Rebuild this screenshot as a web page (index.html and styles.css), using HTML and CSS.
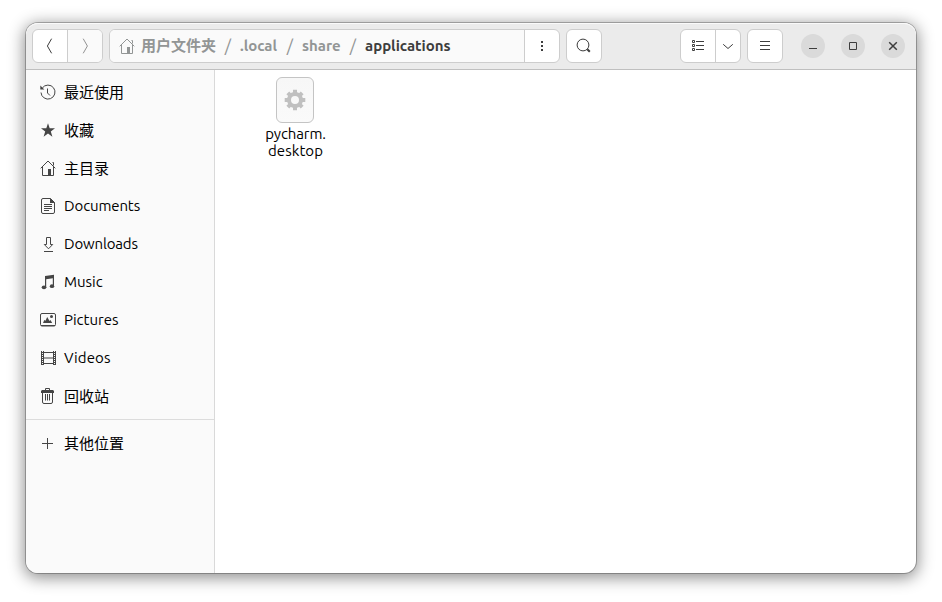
FILE: index.html
```html
<!DOCTYPE html>
<html lang="zh-CN">
<head>
<meta charset="utf-8">
<title>applications</title>
<link rel="stylesheet" href="styles.css">
</head>
<body>
<main class="window">
  <header class="header">
    <div class="group nav">
      <button class="btn" aria-label="Back"><svg class="icon" viewBox="0 0 16 16"><path d="M9.600.7 5.400 8l4.200 7.300"/></svg></button>
      <button class="btn off" aria-label="Forward"><svg class="icon" viewBox="0 0 16 16"><path d="M6.200.7 10.400 8l-4.200 7.300"/></svg></button>
    </div>
    <div class="group path">
      <div class="crumbs">
        <svg class="icon" viewBox="0 0 16 16"><path d="M.7 8.300 8 1l7.300 7.300M2.500 7v8.500h11V7M12.500 2.500h1v3"/><path class="solid" d="M8 9h3v6H8z"/></svg>
        <span class="crumb cjk">用户文件夹</span><i class="slash">/</i>
        <span class="crumb local">.local</span><i class="slash">/</i>
        <span class="crumb share">share</span><i class="slash">/</i>
        <span class="crumb current">applications</span>
      </div>
      <button class="btn" aria-label="More"><svg class="icon" viewBox="0 0 16 16"><path class="solid" d="M7 3h2v2H7zM7 7h2v2H7zM7 11h2v2H7z"/></svg></button>
    </div>
    <div class="group search">
      <button class="btn" aria-label="Search"><svg class="icon" viewBox="0 0 16 16"><circle cx="7" cy="7" r="5.900"/><path class="thick" d="m11.300 11.300 2.500 2.500"/></svg></button>
    </div>
    <div class="group view">
      <button class="btn" aria-label="List view"><svg class="icon" viewBox="0 0 16 16"><path d="M2.500 2.500h2v2h-2zM2.500 6.500h2v2h-2zM2.500 10.500h2v2h-2zM6 3.500h8M6 7.500h8M6 11.500h8"/></svg></button>
      <button class="btn narrow" aria-label="View options"><svg class="icon" viewBox="0 0 16 16"><path d="m3.200 6.300 4.800 4.200 4.800-4.200"/></svg></button>
    </div>
    <div class="group">
      <button class="btn" aria-label="Menu"><svg class="icon" viewBox="0 0 16 16"><path d="M3 3.500h10M3 7.500h10M3 11.500h10"/></svg></button>
    </div>
    <div class="controls">
      <button class="round" aria-label="Minimize"><svg class="icon" viewBox="0 0 16 16"><path d="M4 10.500h8"/></svg></button>
      <button class="round" aria-label="Maximize"><svg class="icon" viewBox="0 0 16 16"><path d="M4.500 4.500h7v7h-7z"/></svg></button>
      <button class="round" aria-label="Close"><svg class="icon" viewBox="0 0 16 16"><path class="cross" d="m4.200 4.200 7.600 7.600m0-7.600-7.600 7.600"/></svg></button>
    </div>
  </header>
  <div class="body">
    <nav class="sidebar">
      <a class="row cjk"><svg class="icon" viewBox="0 0 16 16"><path d="M2.300 4A7 7 0 1 1 1 8.500M7.500 4.500V9l2.500 2.500"/><path class="solid" d="M.3 1.500v4h4z"/></svg><span>最近使用</span></a>
      <a class="row cjk"><svg class="icon" viewBox="0 0 16 16"><path class="solid" d="m8 1.300 1.700 5H15l-4.200 3.300 1.600 5.100L8 11.600l-4.400 3.100 1.600-5.100L1 6.300h5.300z"/></svg><span>收藏</span></a>
      <a class="row cjk"><svg class="icon" viewBox="0 0 16 16"><path d="M.7 8.300 8 1l7.300 7.300M2.500 7v8.500h11V7M12.500 2.500h1v3"/><path class="solid" d="M8 9h3v6H8z"/></svg><span>主目录</span></a>
      <a class="row latin"><svg class="icon" viewBox="0 0 16 16"><path d="M3 .5h7.500l4 4V14a1.500 1.500 0 0 1-1.500 1.500H3A1.500 1.500 0 0 1 1.500 14V2A1.500 1.500 0 0 1 3 .5zM4 6.500h8M4 8.500h8M4 10.500h8M4 12.500h5"/><path class="solid" d="M10 0v5h5z"/></svg><span class="documents">Documents</span></a>
      <a class="row latin"><svg class="icon" viewBox="0 0 16 16"><path d="M6.500 1.500h4v7h2.200l-4.200 4.300-4.200-4.300h2.200zM4 15.500h9"/></svg><span class="downloads">Downloads</span></a>
      <a class="row latin"><svg class="icon" viewBox="0 0 16 16"><path class="solid" d="M5 2 14 .7V12h-1.200V4.300L6.200 5.200V14H5z"/><ellipse class="solid" cx="4" cy="13.300" rx="2.300" ry="1.900"/><ellipse class="solid" cx="12" cy="12.200" rx="2.200" ry="1.900"/></svg><span>Music</span></a>
      <a class="row latin"><svg class="icon" viewBox="0 0 16 16"><rect x=".5" y="1.500" width="15" height="12.500" rx="1.500"/><path d="M1 13.500h14"/><path class="solid" d="m3 11 1.300-3 1.200.7L7.200 5l2.300 4 1-1 1.700 3z"/><circle class="solid" cx="11.500" cy="4.500" r="1.500"/></svg><span>Pictures</span></a>
      <a class="row latin"><svg class="icon" viewBox="0 0 16 16"><path d="M1.500 1v14M15.500 1v14M3.500 1v14M13.500 1v14M3 2.500h11M3 8h11M3 13.500h11"/><path class="film" d="M2.500 2v13M14.500 2v13"/></svg><span class="videos">Videos</span></a>
      <a class="row cjk"><svg class="icon" viewBox="0 0 16 16"><path d="M5.500 2V.5h4V2M2.500 5v9A1.500 1.500 0 0 0 4 15.500h7a1.500 1.500 0 0 0 1.500-1.500V5M5.500 6v6.500M7.500 6v6.500M9.500 6v6.500"/><path class="solid" d="M2 2h11l1 1v2H1V3z"/></svg><span>回收站</span></a>
      <hr>
      <a class="row cjk"><svg class="icon" viewBox="0 0 16 16"><path d="M2 8.500h11M7.500 3v11"/></svg><span>其他位置</span></a>
    </nav>
    <section class="files">
      <div class="file">
        <div class="thumb"><svg class="gear" viewBox="-12 -12 24 24"><circle r="6"/><path d="M0-10.300v3.800M0 6.500v3.800M-10.300 0h3.800M6.500 0h3.800M-7.200-7.200l2.500 2.500M4.700 4.700l2.500 2.500M-7.200 7.200l2.500-2.500M4.700-4.700l2.500-2.500"/></svg></div>
        <div class="name"><span class="stem">pycharm.</span><br><span class="ext">desktop</span></div>
      </div>
    </section>
  </div>
</main>
</body>
</html>
```
FILE: styles.css
```css
* { box-sizing: border-box; }
body {
  margin: 0;
  padding: 23px 26px 29px;
  height: 602px;
  overflow: hidden;
  background: #fff;
  font: 15px/18px Ubuntu, "Noto Sans", "Noto Sans CJK SC", sans-serif;
  color: #000;
}
.window {
  width: 890px;
  height: 550px;
  border-radius: 12px;
  background: #fff;
  box-shadow: 0 0 0 1px rgba(0,0,0,.25), 0 3px 16px 2px rgba(0,0,0,.44);
}
.header {
  display: flex;
  align-items: center;
  height: 47px;
  padding: 0 11px 1px 6px;
  background: #ebebeb;
  border-bottom: 1px solid #bfbfbf;
  border-radius: 12px 12px 0 0;
  box-shadow: inset 0 1px #fafafa;
}
.group {
  display: flex;
  height: 34px;
  border: 1px solid #cdcdcd;
  border-radius: 6px;
  background: #fff;
  overflow: hidden;
}
.nav, .path { margin-right: 6px; }
.view { margin: 0 6px 0 auto; }
.btn, .round {
  display: flex;
  align-items: center;
  justify-content: center;
  padding: 0;
  border: 0;
  background: none;
  color: #3d3d3d;
}
.btn { width: 34px; }
.btn + .btn, .crumbs + .btn { width: 35px; border-left: 1px solid #cdcdcd; }
.btn.narrow { width: 25px; }
.btn.off { background: #fafafa; color: #929292; }
.icon {
  flex: none;
  width: 16px;
  height: 16px;
  fill: none;
  stroke: currentColor;
  stroke-width: 1;
}
.icon .solid { fill: currentColor; stroke: none; }
.icon .thick { stroke-width: 2; }
.icon .cross { stroke-width: 1.5; }
.icon .film { stroke-dasharray: 1 1; }
.path { width: 451px; }
.crumbs {
  display: flex;
  flex: 1;
  align-items: center;
  padding-left: 9px;
  background: #fafafa;
  color: #929595;
  font-weight: 700;
  white-space: nowrap;
}
.crumb.cjk { margin-left: 6px; padding-top: 1px; width: 75px; }
.slash { width: 24px; text-align: center; font-weight: 400; font-style: normal; font-size: 17px; }
.local { width: 38px; }
.share { width: 39px; }
.current { color: #3d3d3d; }
.controls { display: flex; gap: 16px; margin-left: 18px; }
.round { width: 24px; height: 24px; border-radius: 50%; background: #dadada; }
.body { display: flex; height: 503px; }
.sidebar {
  width: 189px;
  padding-top: 4px;
  background: #fafafa;
  border-right: 1px solid #d9d9d9;
  border-bottom-left-radius: 12px;
}
.row {
  display: flex;
  align-items: center;
  gap: 8px;
  height: 38px;
  padding-left: 14px;
}
.row .icon { margin-bottom: 2px; color: #454545; }
.latin span { margin-bottom: 2px; }
.documents { letter-spacing: -.12px; }
.downloads { letter-spacing: -.17px; }
.videos { letter-spacing: .1px; }
hr { height: 1px; margin: 3px 0 5px; border: 0; background: #dcdcdc; }
.files { flex: 1; padding: 7px 0 0 32px; }
.file { display: flex; flex-direction: column; align-items: center; width: 96px; }
.thumb {
  display: flex;
  align-items: center;
  justify-content: center;
  width: 38px;
  height: 46px;
  border: 1px solid #c4c4c4;
  border-radius: 6px;
  background: linear-gradient(#f7f7f7, #fafafa);
}
.gear { width: 24px; height: 24px; fill: none; stroke: #c0c0c0; stroke-width: 4; }
.name { margin-top: 2px; padding-left: 1px; width: 96px; text-align: center; line-height: 17px; }
.stem { letter-spacing: -.1px; }
.ext { letter-spacing: .08px; }
```
